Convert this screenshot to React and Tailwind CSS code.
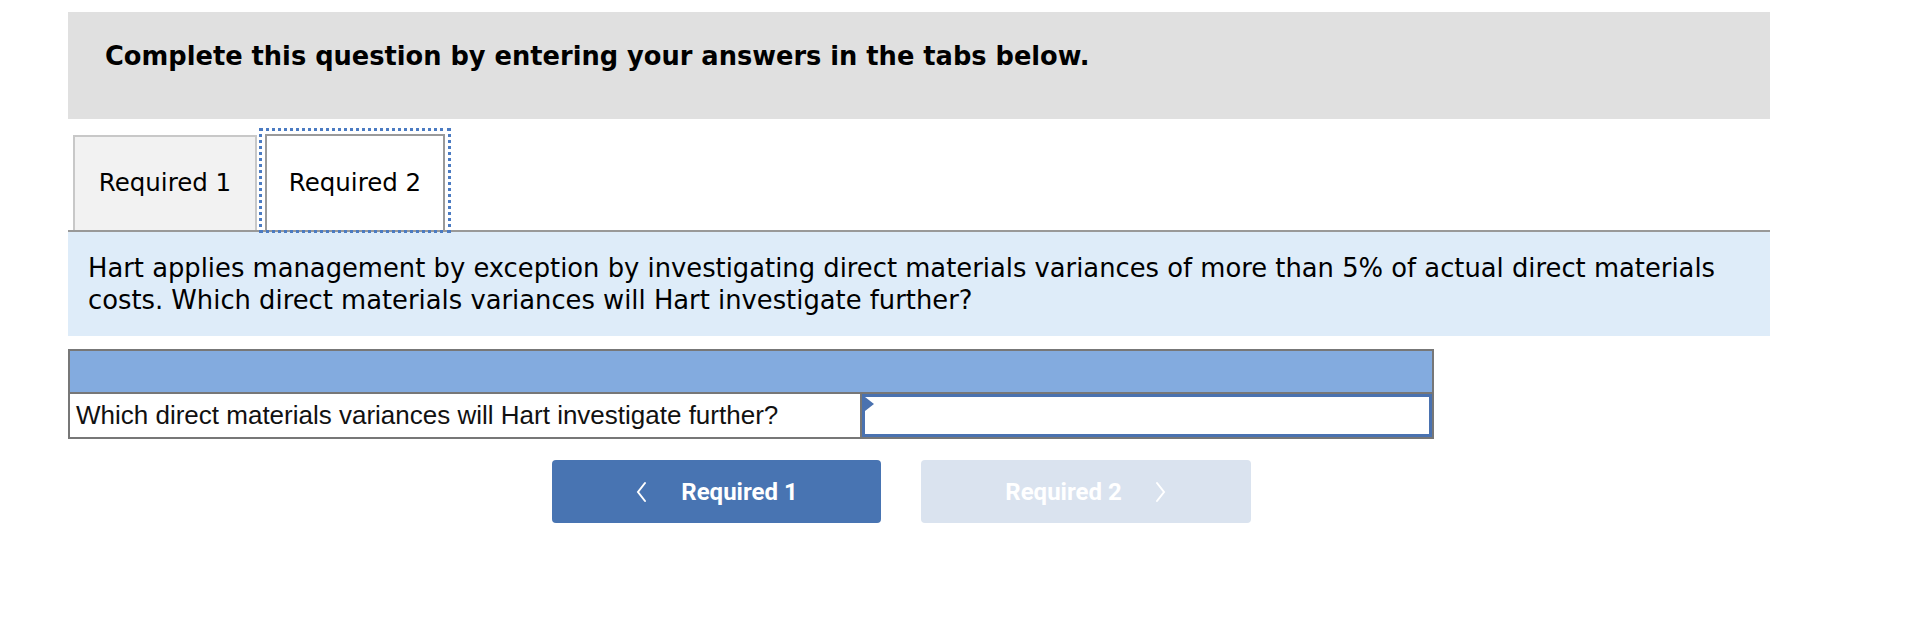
import React from "react";

const verdana = { fontFamily: '"DejaVu Sans", Verdana, sans-serif' };

function Tab({ label, active }) {
  if (active) {
    return (
      <div className="outline-dotted outline-[3px] outline-[#4b7bc2] ml-[5px] mt-[-3px] p-[3px] pb-0">
        <div className="w-[180px] h-[96px] bg-white border-2 border-[#9a9a9a] border-b-0 flex items-center justify-center text-[24.5px] text-black">
          {label}
        </div>
      </div>
    );
  }
  return (
    <div className="w-[184px] h-[95px] bg-[#f2f2f2] border-2 border-[#c8c8c8] border-b-0 flex items-center justify-center text-[24.5px] text-black">
      {label}
    </div>
  );
}

function Chevron({ dir }) {
  return (
    <svg width="12" height="22" viewBox="0 0 12 22" fill="none" stroke="currentColor" strokeWidth="2" strokeLinecap="round">
      {dir === "left" ? <path d="M10 2 L3 11 L10 20" /> : <path d="M2 2 L9 11 L2 20" />}
    </svg>
  );
}

export default function App() {
  return (
    <div className="w-[1924px] h-[620px] bg-white" style={verdana}>
      <div className="ml-[68px] w-[1702px] pt-[12px]">
        {/* instructions header */}
        <div className="h-[107px] bg-[#e0e0e0] pl-[37px] pt-[28px]">
          <p className="text-[25.7px] font-bold text-black leading-[32px]">
            Complete this question by entering your answers in the tabs below.
          </p>
        </div>

        {/* tabs */}
        <div className="mt-[15px] pl-[5px] flex items-end border-b-2 border-[#999999]">
          <Tab label="Required 1" />
          <Tab label="Required 2" active />
        </div>

        {/* prompt */}
        <div className="bg-[#deecf9] h-[104px] pl-[20px] pr-[20px] pt-[20px]">
          <p className="text-[25.8px] leading-[32px] text-black">
            Hart applies management by exception by investigating direct materials variances of more than 5% of actual direct materials costs. Which direct materials variances will Hart investigate further?
          </p>
        </div>

        {/* answer table */}
        <div className="mt-[13px] w-[1366px] border-2 border-[#777777]" style={{ fontFamily: '"Liberation Sans", Arial, sans-serif' }}>
          <div className="h-[43px] bg-[#83abdf] border-b-2 border-[#777777]" />
          <div className="flex h-[43px]">
            <div className="w-[792px] border-r-2 border-[#777777] flex items-center pl-[6px] text-[26px] text-[#111]">
              Which direct materials variances will Hart investigate further?
            </div>
            <div className="relative flex-1 border-[3px] border-[#4a72b0] bg-white">
              <div className="absolute left-0 top-0 w-0 h-0 border-y-[7px] border-y-transparent border-l-[9px] border-l-[#4a72b0]" />
            </div>
          </div>
        </div>

        {/* nav buttons */}
        <div className="mt-[21px] ml-[484px] flex gap-[40px]" style={{ fontFamily: 'Roboto, "Noto Sans", sans-serif' }}>
          <button className="w-[329px] h-[63px] rounded-[4px] bg-[#4874b2] text-white flex items-center justify-center gap-[34px] text-[24px] font-bold">
            <Chevron dir="left" />
            <span>Required 1</span>
          </button>
          <button className="w-[330px] h-[63px] rounded-[4px] bg-[#dae3ef] text-white flex items-center justify-center gap-[33px] text-[24px] font-bold">
            <span>Required 2</span>
            <Chevron dir="right" />
          </button>
        </div>
      </div>
    </div>
  );
}
